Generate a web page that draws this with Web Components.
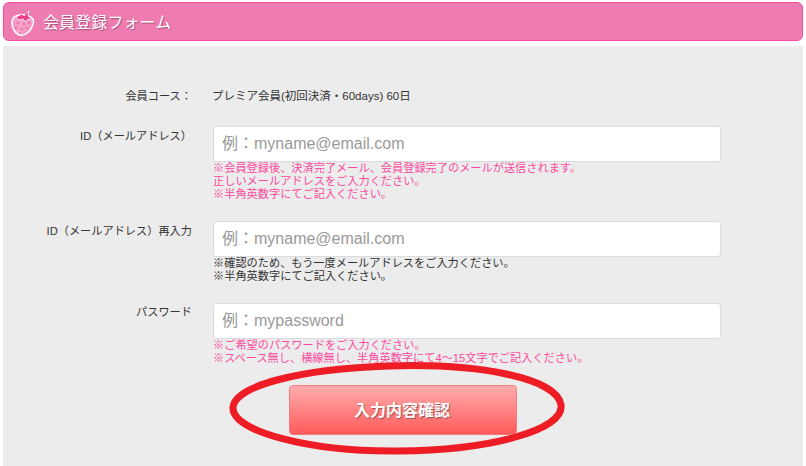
<!DOCTYPE html>
<html lang="ja">
<head>
<meta charset="utf-8">
<title>会員登録フォーム</title>
<style>
    html, body { margin: 0; padding: 0; background: #fff; height: 466px; overflow: hidden; }
    body { font-family: "Liberation Sans", "Noto Sans CJK JP", sans-serif; }
</style>
</head>
<body>
<reg-page>
    <reg-header>会員登録フォーム</reg-header>
    <reg-panel>
        <reg-row label="会員コース：" kind="static">プレミア会員(初回決済・60days) 60日</reg-row>
        <reg-row label="ID（メールアドレス）" placeholder="例：myname@email.com" tone="pink" gap="20">※会員登録後、決済完了メール、会員登録完了のメールが送信されます。<br>正しいメールアドレスをご入力ください。<br>※半角英数字にてご記入ください。</reg-row>
        <reg-row label="ID（メールアドレス）再入力" placeholder="例：myname@email.com" gap="20">※確認のため、もう一度メールアドレスをご入力ください。<br>※半角英数字にてご記入ください。</reg-row>
        <reg-row label="パスワード" placeholder="例：mypassword" tone="pink" label-top="2">※ご希望のパスワードをご入力ください。<br>※スペース無し、横線無し、半角英数字にて4～15文字でご記入ください。</reg-row>
        <reg-submit>入力内容確認</reg-submit>
    </reg-panel>
</reg-page>

<script>
class RegPage extends HTMLElement {
    constructor() {
        super();
        const shadowRoot = this.attachShadow({ mode: "open" });
        shadowRoot.innerHTML = `
            <style>
                :host {
                    display: flex;
                    flex-direction: column;
                    gap: 5px;
                    padding: 2px 3px 0 3px;
                    height: 464px;
                    overflow: hidden;
                }
            </style>
            <slot></slot>
        `;
    }
}

class RegHeader extends HTMLElement {
    constructor() {
        super();
        const shadowRoot = this.attachShadow({ mode: "open" });
        shadowRoot.innerHTML = `
            <style>
                :host {
                    display: flex;
                    align-items: center;
                    gap: 9px;
                    box-sizing: border-box;
                    height: 39px;
                    padding-left: 7px;
                    background: #ee7cb0;
                    border: 1px solid #fb4aa0;
                    border-radius: 6px;
                    color: #fff;
                    font-size: 16px;
                    text-shadow: 1px 1px 1px #a8507c;
                }
                svg { flex: none; margin-top: 1px; }
                span { margin-left: -1px; margin-top: -1px; letter-spacing: 0.1px; }
            </style>
            <svg width="24" height="29" viewBox="0 0 24 29">
                <path d="M5 8C9 6 16 7 20 9C23 11 23 15 21 19C19 24 14 28 9 27C4 26 1 20 1 15C1 12 2 9 5 8Z" fill="#f79cc4" stroke="#fff" stroke-width="1.500"/>
                <path d="M5 9L11 6L13 8L18 3L17 8L22 11L17 11L15 14L12 11L8 12Z" fill="#f0408a" stroke="#fff" stroke-width="0.800"/>
                <g fill="#e8609c">
                    <circle cx="7" cy="15" r="1"/><circle cx="13" cy="16" r="1"/><circle cx="18" cy="15" r="1"/>
                    <circle cx="5" cy="20" r="1"/><circle cx="11" cy="21" r="1"/><circle cx="16" cy="20" r="1"/>
                    <circle cx="9" cy="25" r="0.800"/>
                </g>
            </svg>
            <span><slot></slot></span>
        `;
    }
}

class RegPanel extends HTMLElement {
    constructor() {
        super();
        const shadowRoot = this.attachShadow({ mode: "open" });
        shadowRoot.innerHTML = `
            <style>
                :host {
                    display: flex;
                    flex-direction: column;
                    flex: 1;
                    box-sizing: border-box;
                    padding-top: 41px;
                    background: #ececec;
                }
            </style>
            <slot></slot>
        `;
    }
}

class RegRow extends HTMLElement {
    constructor() {
        super();
        const shadowRoot = this.attachShadow({ mode: "open" });
        const isStatic = this.getAttribute("kind") === "static";
        const label = this.getAttribute("label") || "";
        const placeholder = this.getAttribute("placeholder") || "";
        const gap = this.getAttribute("gap") || "0";
        const labelTop = this.getAttribute("label-top") || (isStatic ? "2" : "3");
        const tone = this.getAttribute("tone") === "pink" ? "#fb4aa0" : "#333";

        shadowRoot.innerHTML = `
            <style>
                :host {
                    display: grid;
                    grid-template-columns: 189px 508px;
                    column-gap: 21px;
                    margin-bottom: ${gap}px;
                    font-size: 11.2px;
                    color: #333;
                }
                .label {
                    text-align: right;
                    line-height: 14px;
                    padding-top: ${labelTop}px;
                }
                .value { line-height: 14px; }
                .static {
                    height: 39px;
                    padding-top: 2px;
                    box-sizing: border-box;
                    margin-left: -1px;
                    font-size: 11.5px;
                }
                input {
                    display: block;
                    box-sizing: border-box;
                    width: 508px;
                    height: 36px;
                    padding: 0 8px;
                    border: 1px solid #dcdcdc;
                    border-radius: 3px;
                    background: #fff;
                    font: 16px "Liberation Sans", "Noto Sans CJK JP", sans-serif;
                    outline: none;
                }
                input::placeholder { color: #999; opacity: 1; }
                .note {
                    font-size: 11.2px;
                    line-height: 13px;
                    color: ${tone};
                }
            </style>
            <div class="label">${label}</div>
            ${isStatic
                ? `<div class="value static"><slot></slot></div>`
                : `<div class="value">
                       <input type="text" placeholder="${placeholder}">
                       <div class="note"><slot></slot></div>
                   </div>`}
        `;
    }
}

class RegSubmit extends HTMLElement {
    constructor() {
        super();
        const shadowRoot = this.attachShadow({ mode: "open" });
        shadowRoot.innerHTML = `
            <style>
                :host {
                    display: block;
                    position: relative;
                    align-self: flex-start;
                    margin: 20px 0 0 286px;
                }
                button {
                    display: block;
                    box-sizing: border-box;
                    width: 228px;
                    height: 50px;
                    border: 1px solid #f37c7c;
                    border-radius: 4px;
                    background: linear-gradient(to bottom, #ffadad, #ff5a5a);
                    color: #fff;
                    font: bold 16px "Liberation Sans", "Noto Sans CJK JP", sans-serif;
                    text-shadow: 1px 1px 1px #a05050;
                    padding: 0 2px 2px 0;
                }
                svg {
                    position: absolute;
                    left: -60px;
                    top: -23px;
                    pointer-events: none;
                }
            </style>
            <button type="button"><slot></slot></button>
            <svg width="336" height="94" viewBox="0 0 336 94">
                <path d="M4 45C6 24 70 7 160 4C250 1 328 16 332 43C335 68 262 88 170 89C80 90 2 69 4 45Z" fill="none" stroke="#ee1c25" stroke-width="7"/>
            </svg>
        `;
    }
}

window.customElements.define("reg-page", RegPage);
window.customElements.define("reg-header", RegHeader);
window.customElements.define("reg-panel", RegPanel);
window.customElements.define("reg-row", RegRow);
window.customElements.define("reg-submit", RegSubmit);
</script>
</body>
</html>
